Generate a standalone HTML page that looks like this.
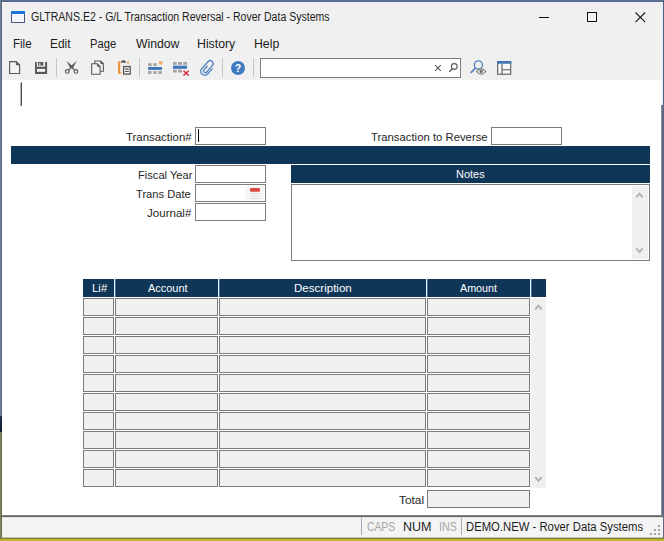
<!DOCTYPE html>
<html>
<head>
<meta charset="utf-8">
<title>GLTRANS.E2 - G/L Transaction Reversal - Rover Data Systems</title>
<style>
*{box-sizing:border-box;margin:0;padding:0}
html,body{width:664px;height:541px;overflow:hidden;background:#f0f0f0}
body{position:relative;font-family:"Liberation Sans",Arial,sans-serif;font-size:12px;color:#000}
.abs{position:absolute}
.t{position:absolute;white-space:nowrap;line-height:14px;height:14px;transform-origin:0 50%}
#title{left:0;top:0;width:664px;height:30px;background:#f0f0f0}
#menubar{left:0;top:30px;width:664px;height:26px;background:#f0f0f0}
#toolbar{left:0;top:56px;width:664px;height:24px;background:#f0f0f0}
#content{left:2px;top:80px;width:659px;height:435px;background:#fff}
#status{left:2px;top:515px;width:661px;height:23px;background:#f4f4f4;border-top:1px solid #858585;box-shadow:inset 0 1px 0 #686868,inset 0 2px 0 #e0e0e0}
.inp{position:absolute;background:#fff;border:1px solid #7c7c7c}
.navy{position:absolute;background:#0f3557}
.hd{position:absolute;background:#0f3557;height:18px;top:279px}
.cell{position:absolute;background:#f0f0f0;border:1px solid #7b7b7b;height:18px}
.sep{position:absolute;width:1px;background:#a9a9a9}
</style>
</head>
<body>
<div class="abs" id="title"></div>
<div class="abs" id="menubar"></div>
<div class="abs" id="toolbar"></div>
<div class="abs" id="content"></div>
<div class="abs" id="status"></div>

<!-- window frame -->
<div class="abs" style="left:0;top:0;width:664px;height:1px;background:#5e719b"></div>
<div class="abs" style="left:0;top:1px;width:664px;height:1px;background:#51668a"></div>
<div class="abs" style="left:2px;top:2px;width:660px;height:1px;background:#f0f6fc"></div>
<div class="abs" style="left:0;top:0;width:1px;height:416px;background:#6b7f99"></div>
<div class="abs" style="left:1px;top:0;width:1px;height:416px;background:#55687e"></div>
<div class="abs" style="left:0;top:416px;width:2px;height:16px;background:linear-gradient(#1e3450,#0d1b2e)"></div>
<div class="abs" style="left:0;top:432px;width:1px;height:109px;background:#7f825a"></div>
<div class="abs" style="left:1px;top:432px;width:1px;height:109px;background:#6b6e45"></div>
<div class="abs" style="left:663px;top:0;width:1px;height:105px;background:#4f5f80"></div>
<div class="abs" style="left:662px;top:2px;width:1px;height:103px;background:#eaf1fd"></div>
<div class="abs" style="left:661px;top:105px;width:1px;height:410px;background:#8d93a6"></div>
<div class="abs" style="left:662px;top:105px;width:2px;height:410px;background:#5d6782"></div>
<div class="abs" style="left:663px;top:515px;width:1px;height:23px;background:#5d6782"></div>
<div class="abs" style="left:2px;top:537px;width:661px;height:1px;background:#c4c4ae"></div>
<div class="abs" style="left:0;top:538px;width:664px;height:1px;background:#807e3a"></div>
<div class="abs" style="left:0;top:539px;width:664px;height:2px;background:#bdb72f"></div>

<!-- title icon + controls -->
<svg class="abs" style="left:11px;top:11px" width="14" height="12" viewBox="0 0 14 12">
  <rect x="0.500" y="0.500" width="13" height="11" fill="#f4f6fa" stroke="#4a5a78"/>
  <rect x="0" y="0" width="14" height="3" fill="#1a73d8"/>
</svg>
<svg class="abs" style="left:530px;top:2px" width="130" height="28" viewBox="530 2 130 28">
  <path d="M539 17.500H549" stroke="#111" stroke-width="1" fill="none"/>
  <rect x="587.500" y="12.500" width="9" height="9" stroke="#111" stroke-width="1" fill="none"/>
  <path d="M635.500 12.500L645.200 22.200M645.200 12.500L635.500 22.200" stroke="#1a1a1a" stroke-width="1.100" fill="none"/>
</svg>

<svg class="abs" style="left:0;top:56px" width="664" height="24" viewBox="0 56 664 24">
  <!-- separators -->
  <g stroke="#c6c6c6" stroke-width="1">
    <path d="M56.500 58V77M139.500 58V77M222.500 58V77M253.500 58V77"/>
  </g>
  <!-- new -->
  <path d="M9.600 61.600H16.200L19.600 65V73.500H9.600Z" fill="#f4f4f4" stroke="#5a5a5a" stroke-width="1.150" stroke-linejoin="miter"/>
  <path d="M16.200 61.600V65H19.600Z" fill="#5a5a5a" stroke="#5a5a5a" stroke-width="0.600"/>
  <!-- save -->
  <rect x="35" y="62" width="12.100" height="12" fill="#595959"/>
  <rect x="36.900" y="62" width="8.200" height="4.700" fill="#f0f0f0"/>
  <rect x="38" y="62" width="5.300" height="3.500" fill="#595959"/>
  <rect x="39.100" y="63.100" width="1.300" height="1.800" fill="#dedede"/>
  <rect x="36.900" y="68.900" width="8.200" height="2.900" fill="#f5f5f5"/>
  <!-- cut -->
  <g stroke="#5a5a5a" fill="none">
    <circle cx="67.300" cy="71.400" r="1.850" stroke-width="1.200"/>
    <circle cx="75.900" cy="71.400" r="1.850" stroke-width="1.200"/>
    <path d="M71.600 67.200L74.600 70.100M71.600 67.200L68.600 70.100" stroke-width="1.300"/>
  </g>
  <path d="M66.500 61.100L73 66.500L70.500 68.500Z" fill="#5a5a5a"/>
  <path d="M76.700 61.100L70.200 66.500L72.700 68.500Z" fill="#5a5a5a"/>
  <!-- copy -->
  <path d="M94.800 61H100.600L103.400 63.800V71.200H94.800Z" fill="#f4f4f4" stroke="#5a5a5a" stroke-width="1.100" stroke-linejoin="miter"/>
  <path d="M100.600 61V63.800H103.400Z" fill="#5a5a5a" stroke="#5a5a5a" stroke-width="0.500"/>
  <path d="M91.700 63.800H97.300L100.100 66.600V74.300H91.700Z" fill="#f4f4f4" stroke="#5a5a5a" stroke-width="1.100" stroke-linejoin="miter"/>
  <path d="M97.300 63.800V66.600H100.100Z" fill="#5a5a5a" stroke="#5a5a5a" stroke-width="0.500"/>
  <!-- paste -->
  <rect x="118.100" y="61.200" width="2.100" height="12.300" fill="#ee913c"/>
  <rect x="118.100" y="72.400" width="3.300" height="1.100" fill="#ee913c"/>
  <rect x="120" y="61.200" width="1.300" height="1.100" fill="#f2b071"/>
  <rect x="127.200" y="61.200" width="1.500" height="3.200" fill="#eda862"/>
  <path d="M121.100 62.700V61.600Q123.500 58.600 125.900 61.600V62.700Z" fill="#5a5a5a"/>
  <rect x="123.600" y="66.600" width="6.600" height="7.500" fill="#fafafa" stroke="#4f4f4f" stroke-width="1.250"/>
  <path d="M125.100 69.100H128.800M125.100 71.500H128.800" stroke="#4f4f4f" stroke-width="1.050"/>
  <!-- grid insert -->
  <g fill="#a6a6a6">
    <rect x="148.100" y="63.200" width="3.500" height="2.900"/><rect x="153.200" y="63.200" width="3.500" height="2.900"/>
    <rect x="148.100" y="71" width="3.500" height="2.900"/><rect x="153.200" y="71" width="3.500" height="2.900"/><rect x="158.300" y="71" width="3.600" height="2.900"/>
  </g>
  <rect x="148.100" y="67" width="13.800" height="2.900" fill="#3f74b8"/>
  <rect x="158.800" y="61.200" width="3.600" height="3.300" fill="#e8ae72"/>
  <!-- grid delete -->
  <g fill="#a3a3a3">
    <rect x="173" y="62" width="3.700" height="2.800"/><rect x="178" y="62" width="4" height="2.800"/><rect x="183.200" y="62" width="3.800" height="2.800"/>
    <rect x="173" y="69.700" width="3.700" height="2.800"/><rect x="178" y="69.700" width="4" height="2.800"/>
  </g>
  <rect x="173" y="65.700" width="14" height="3.100" fill="#3f74b8"/>
  <path d="M183.500 70.700L188.700 75.500M188.700 70.700L183.500 75.500" stroke="#d9283c" stroke-width="1.500" fill="none"/>
  <!-- paperclip -->
  <path d="M207.200 66.200L203.900 69.900A1.700 1.700 0 0 0 206.500 72.200L212.300 65.600A2.900 2.900 0 0 0 208 61.700L201.700 68.800A3.900 3.900 0 0 0 207.600 74L212.200 68.900" fill="none" stroke="#5583c0" stroke-width="1.350" stroke-linecap="round"/>
  <!-- help -->
  <circle cx="238" cy="68" r="7" fill="#3f7abf"/>
  <text x="238" y="71.900" font-family="Liberation Sans, Arial, sans-serif" font-size="10.500" font-weight="bold" fill="#fff" text-anchor="middle">?</text>
  <!-- search box -->
  <rect x="260.500" y="58.500" width="200" height="19" fill="#fff" stroke="#7c7c7c" stroke-width="1"/>
  <path d="M435.200 65.200L440.800 70.800M440.800 65.200L435.200 70.800" stroke="#5a5a5a" stroke-width="1.100" fill="none"/>
  <circle cx="454.300" cy="66.500" r="2.900" fill="none" stroke="#5a5a5a" stroke-width="1.100"/>
  <path d="M452.300 68.700L449.300 71.700" stroke="#5a5a5a" stroke-width="1.300" fill="none"/>
  <!-- find -->
  <circle cx="478.400" cy="64.900" r="4" fill="none" stroke="#4f7fbe" stroke-width="1.300"/>
  <path d="M475.500 68L470.700 72.800" stroke="#4f7fbe" stroke-width="1.700" fill="none"/>
  <path d="M476.600 71.500Q481.200 66 485.800 71.500Q481.200 77 476.600 71.500Z" fill="#f8f8f8" stroke="#6e6e6e" stroke-width="1.150"/>
  <circle cx="481.200" cy="71.500" r="1.700" fill="#6e6e6e"/>
  <!-- layout -->
  <rect x="497.700" y="62" width="13" height="12.200" fill="#f8f8f8" stroke="#5a5a5a" stroke-width="1.100"/>
  <rect x="497.100" y="61" width="14.200" height="2.700" fill="#3f74b8"/>
  <path d="M502 63.700V74.200M502 69.700H510.800" stroke="#5a5a5a" stroke-width="1.100" fill="none"/>
</svg>

<!-- form -->
<div class="abs" style="left:21px;top:82px;width:1px;height:24px;background:linear-gradient(#9a9a9a 0,#4c4c4c 1px,#4c4c4c 23px,#8a8a8a 24px)"></div>
<div class="abs" style="left:20px;top:83px;width:1px;height:23px;background:#b4b4b4"></div>
<div class="inp" style="left:195px;top:127px;width:71px;height:18px"></div>
<div class="abs" style="left:198px;top:129px;width:1.400px;height:13px;background:#000"></div>
<div class="inp" style="left:491px;top:127px;width:71px;height:18px"></div>
<div class="navy" style="left:11px;top:146px;width:639px;height:18px"></div>
<div class="inp" style="left:195px;top:165px;width:71px;height:18px"></div>
<div class="inp" style="left:195px;top:184px;width:71px;height:18px"></div>
<div class="inp" style="left:195px;top:203px;width:71px;height:18px"></div>
<!-- calendar icon -->
<svg class="abs" style="left:244px;top:185px" width="22" height="16" viewBox="244 185 22 16">
  <rect x="245" y="186" width="19" height="14" fill="#f6f6f6"/>
  <rect x="250" y="188" width="10" height="3.800" rx="1.200" fill="#dc4a40"/>
  <path d="M250.500 193.500H259.500M250.500 196H259.500M250.500 198.500H259.500" stroke="#dedede" stroke-width="1"/>
</svg>

<div class="navy" style="left:291px;top:165px;width:359px;height:18px"></div>
<div class="inp" style="left:291px;top:184px;width:359px;height:77px"></div>
<div class="abs" style="left:632px;top:186px;width:16px;height:73px;background:#f0f0f0"></div>
<svg class="abs" style="left:632px;top:186px" width="16" height="73" viewBox="632 186 16 73">
  <path d="M636.300 197.300L639.500 193.600L642.700 197.300" fill="none" stroke="#b0b0b0" stroke-width="1.800"/>
  <path d="M636.300 248.400L639.500 252.100L642.700 248.400" fill="none" stroke="#b0b0b0" stroke-width="1.800"/>
</svg>

<!-- grid -->
<div class="hd" style="left:83px;width:463px;background:#dff0fd"></div>
<div class="hd" style="left:83px;width:31px"></div>
<div class="hd" style="left:115px;width:103px;border-left:1px solid #4a759f"></div>
<div class="hd" style="left:219px;width:207px;border-left:1px solid #4a759f"></div>
<div class="hd" style="left:427px;width:103px;border-left:1px solid #4a759f"></div>
<div class="hd" style="left:531px;width:15px;border-left:1px solid #4a759f"></div>
<div class="abs" style="left:531px;top:298px;width:15px;height:190px;background:#f0f0f0"></div>
<svg class="abs" style="left:531px;top:298px" width="15" height="190" viewBox="531 298 15 190">
  <path d="M535.300 309.300L538.500 305.600L541.700 309.300" fill="none" stroke="#b0b0b0" stroke-width="1.800"/>
  <path d="M535.300 477.200L538.500 480.900L541.700 477.200" fill="none" stroke="#b0b0b0" stroke-width="1.800"/>
</svg>
<div class="cell" style="left:83px;top:298px;width:31px"></div>
<div class="cell" style="left:115px;top:298px;width:103px"></div>
<div class="cell" style="left:219px;top:298px;width:207px"></div>
<div class="cell" style="left:427px;top:298px;width:103px"></div>
<div class="cell" style="left:83px;top:317px;width:31px"></div>
<div class="cell" style="left:115px;top:317px;width:103px"></div>
<div class="cell" style="left:219px;top:317px;width:207px"></div>
<div class="cell" style="left:427px;top:317px;width:103px"></div>
<div class="cell" style="left:83px;top:336px;width:31px"></div>
<div class="cell" style="left:115px;top:336px;width:103px"></div>
<div class="cell" style="left:219px;top:336px;width:207px"></div>
<div class="cell" style="left:427px;top:336px;width:103px"></div>
<div class="cell" style="left:83px;top:355px;width:31px"></div>
<div class="cell" style="left:115px;top:355px;width:103px"></div>
<div class="cell" style="left:219px;top:355px;width:207px"></div>
<div class="cell" style="left:427px;top:355px;width:103px"></div>
<div class="cell" style="left:83px;top:374px;width:31px"></div>
<div class="cell" style="left:115px;top:374px;width:103px"></div>
<div class="cell" style="left:219px;top:374px;width:207px"></div>
<div class="cell" style="left:427px;top:374px;width:103px"></div>
<div class="cell" style="left:83px;top:393px;width:31px"></div>
<div class="cell" style="left:115px;top:393px;width:103px"></div>
<div class="cell" style="left:219px;top:393px;width:207px"></div>
<div class="cell" style="left:427px;top:393px;width:103px"></div>
<div class="cell" style="left:83px;top:412px;width:31px"></div>
<div class="cell" style="left:115px;top:412px;width:103px"></div>
<div class="cell" style="left:219px;top:412px;width:207px"></div>
<div class="cell" style="left:427px;top:412px;width:103px"></div>
<div class="cell" style="left:83px;top:431px;width:31px"></div>
<div class="cell" style="left:115px;top:431px;width:103px"></div>
<div class="cell" style="left:219px;top:431px;width:207px"></div>
<div class="cell" style="left:427px;top:431px;width:103px"></div>
<div class="cell" style="left:83px;top:450px;width:31px"></div>
<div class="cell" style="left:115px;top:450px;width:103px"></div>
<div class="cell" style="left:219px;top:450px;width:207px"></div>
<div class="cell" style="left:427px;top:450px;width:103px"></div>
<div class="cell" style="left:83px;top:469px;width:31px"></div>
<div class="cell" style="left:115px;top:469px;width:103px"></div>
<div class="cell" style="left:219px;top:469px;width:207px"></div>
<div class="cell" style="left:427px;top:469px;width:103px"></div>
<div class="cell" style="left:427px;top:490px;width:103px"></div>

<!-- status -->
<div class="sep" style="left:361px;top:518px;height:17px"></div>
<div class="sep" style="left:461px;top:518px;height:17px"></div>
<svg class="abs" style="left:648px;top:523px" width="13" height="13" viewBox="648 523 13 13">
  <g fill="#a2a2a2">
    <rect x="658" y="525" width="2" height="2"/>
    <rect x="654" y="529" width="2" height="2"/><rect x="658" y="529" width="2" height="2"/>
    <rect x="650" y="533" width="2" height="2"/><rect x="654" y="533" width="2" height="2"/><rect x="658" y="533" width="2" height="2"/>
  </g>
</svg>

<!-- texts -->
<div class="t" style="left:30.56px;top:9.84px;font-size:12px;color:#1c1c1c;transform:scaleX(0.8779)">GLTRANS.E2 - G/L Transaction Reversal - Rover Data Systems</div>
<div class="t" style="left:13.46px;top:36.74px;font-size:12.3px;color:#1c1c1c;transform:scaleX(0.9390)">File</div>
<div class="t" style="left:50.44px;top:36.74px;font-size:12.3px;color:#1c1c1c;transform:scaleX(0.9645)">Edit</div>
<div class="t" style="left:89.55px;top:36.74px;font-size:12.3px;color:#1c1c1c;transform:scaleX(0.9104)">Page</div>
<div class="t" style="left:135.76px;top:36.74px;font-size:12.3px;color:#1c1c1c;transform:scaleX(0.9933)">Window</div>
<div class="t" style="left:197.36px;top:36.74px;font-size:12.3px;color:#1c1c1c;transform:scaleX(0.9995)">History</div>
<div class="t" style="left:254.34px;top:36.74px;font-size:12.3px;color:#1c1c1c;transform:scaleX(0.9980)">Help</div>
<div class="t" style="left:126.17px;top:130.02px;font-size:11.5px;color:#262626;transform:scaleX(0.9928)">Transaction#</div>
<div class="t" style="left:370.97px;top:130.02px;font-size:11.5px;color:#262626;transform:scaleX(0.9845)">Transaction to Reverse</div>
<div class="t" style="left:137.60px;top:168.02px;font-size:11.5px;color:#262626;transform:scaleX(0.9669)">Fiscal Year</div>
<div class="t" style="left:135.96px;top:187.02px;font-size:11.5px;color:#262626;transform:scaleX(0.9691)">Trans Date</div>
<div class="t" style="left:147.31px;top:206.02px;font-size:11.5px;color:#262626;transform:scaleX(1.0057)">Journal#</div>
<div class="t" style="left:398.96px;top:492.52px;font-size:11.5px;color:#262626;transform:scaleX(1.0309)">Total</div>
<div class="t" style="left:455.61px;top:167.19px;font-size:11px;color:#fff;transform:scaleX(0.9962)">Notes</div>
<div class="t" style="left:91.58px;top:281.19px;font-size:11px;color:#fff;transform:scaleX(1.0402)">Li#</div>
<div class="t" style="left:147.63px;top:281.19px;font-size:11px;color:#fff;transform:scaleX(0.9951)">Account</div>
<div class="t" style="left:293.52px;top:281.19px;font-size:11px;color:#fff;transform:scaleX(1.0498)">Description</div>
<div class="t" style="left:459.62px;top:281.19px;font-size:11px;color:#fff;transform:scaleX(0.9762)">Amount</div>
<div class="t" style="left:366.62px;top:520.04px;font-size:12px;color:#a6a6a6;transform:scaleX(0.8612)">CAPS</div>
<div class="t" style="left:403.31px;top:520.04px;font-size:12px;color:#1c1c1c;transform:scaleX(1.0456)">NUM</div>
<div class="t" style="left:439.44px;top:520.04px;font-size:12px;color:#a6a6a6;transform:scaleX(0.8885)">INS</div>
<div class="t" style="left:465.57px;top:520.04px;font-size:12px;color:#1c1c1c;transform:scaleX(0.9418)">DEMO.NEW - Rover Data Systems</div>
</body>
</html>
